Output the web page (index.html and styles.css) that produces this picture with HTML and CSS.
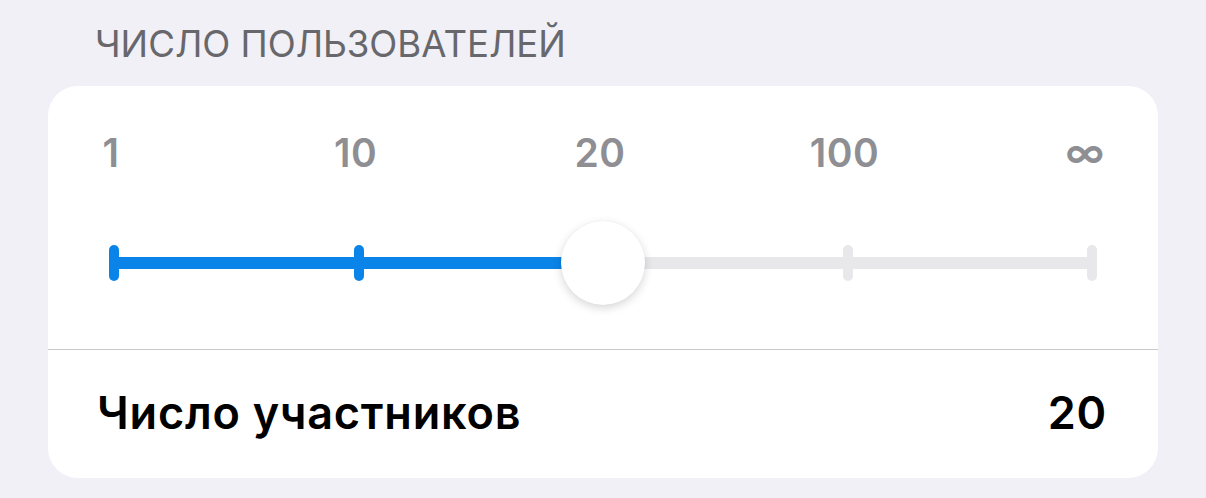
FILE: index.html
```html
<!DOCTYPE html>
<html lang="ru">
<head>
    <meta charset="UTF-8">
    <meta name="viewport" content="width=device-width, initial-scale=1.0">
    <title>Число пользователей</title>
    <link rel="stylesheet" href="styles.css">
</head>
<body>
    <h2 class="section-title">ЧИСЛО ПОЛЬЗОВАТЕЛЕЙ</h2>

    <div class="card">
        <div class="slider-block">
            <div class="scale">
                <span class="mark"><span>1</span></span>
                <span class="mark"><span>10</span></span>
                <span class="mark"><span>20</span></span>
                <span class="mark"><span>100</span></span>
                <span class="mark"><span class="inf">∞</span></span>
            </div>

            <div class="slider">
                <div class="track">
                    <div class="fill"></div>
                    <div class="rest"></div>
                </div>
                <div class="ticks">
                    <span class="tick on"></span>
                    <span class="tick on"></span>
                    <span class="tick"></span>
                    <span class="tick"></span>
                    <span class="tick"></span>
                </div>
                <div class="thumb"></div>
            </div>
        </div>

        <div class="row">
            <span class="row-label">Число участников</span>
            <span class="row-value">20</span>
        </div>
    </div>
</body>
</html>
```

FILE: styles.css
```css
body {
    margin: 0;
    background: #f1f0f6;
    font-family: Inter, "Noto Sans", sans-serif;
}
.section-title {
    margin: 0 0 20px;
    padding: 22px 0 0 95px;
    font-size: 36.6px;
    line-height: 44px;
    font-weight: 400;
    color: #67676c;
}
.card {
    margin: 0 48px;
    background: #fff;
    border-radius: 30px;
    overflow: hidden;
}
.slider-block {
    padding: 45px 66px 44px;
    border-bottom: 1px solid #c9c8cd;
}
.scale {
    display: flex;
    justify-content: space-between;
    height: 44px;
    margin-bottom: 46px;
}
.mark {
    width: 0;
    display: flex;
    justify-content: center;
    white-space: nowrap;
    font-size: 39px;
    line-height: 44px;
    font-weight: 600;
    letter-spacing: 0.5px;
    color: #8e8e93;
}
.mark span {
    margin-left: -6px;
}
.mark .inf {
    font-size: 40px;
    margin-left: -14px;
}
.slider {
    position: relative;
    height: 84px;
}
.track {
    display: flex;
    padding-top: 36px;
}
.fill {
    width: 50%;
    height: 12px;
    background: #0a84e8;
}
.rest {
    flex: 1;
    height: 12px;
    background: #e8e8ea;
}
.ticks {
    position: absolute;
    left: 0;
    right: 0;
    top: 24px;
    display: flex;
    justify-content: space-between;
}
.tick {
    width: 0;
    display: flex;
    justify-content: center;
}
.tick::before {
    content: "";
    flex: none;
    width: 10px;
    height: 36px;
    border-radius: 5px;
    background: #e8e8ea;
}
.tick.on::before {
    background: #0a84e8;
}
.thumb {
    position: absolute;
    left: 50%;
    top: 0;
    width: 84px;
    height: 84px;
    margin-left: -42px;
    border-radius: 50%;
    background: #fff;
    box-shadow: 0 3px 10px rgba(0, 0, 0, 0.16), 0 0 1px rgba(0, 0, 0, 0.08);
}
.row {
    display: flex;
    justify-content: space-between;
    align-items: center;
    height: 124px;
    padding: 0 51px 4px 49px;
    font-size: 45px;
    font-weight: 600;
    letter-spacing: 0.8px;
    color: #000;
}
```
